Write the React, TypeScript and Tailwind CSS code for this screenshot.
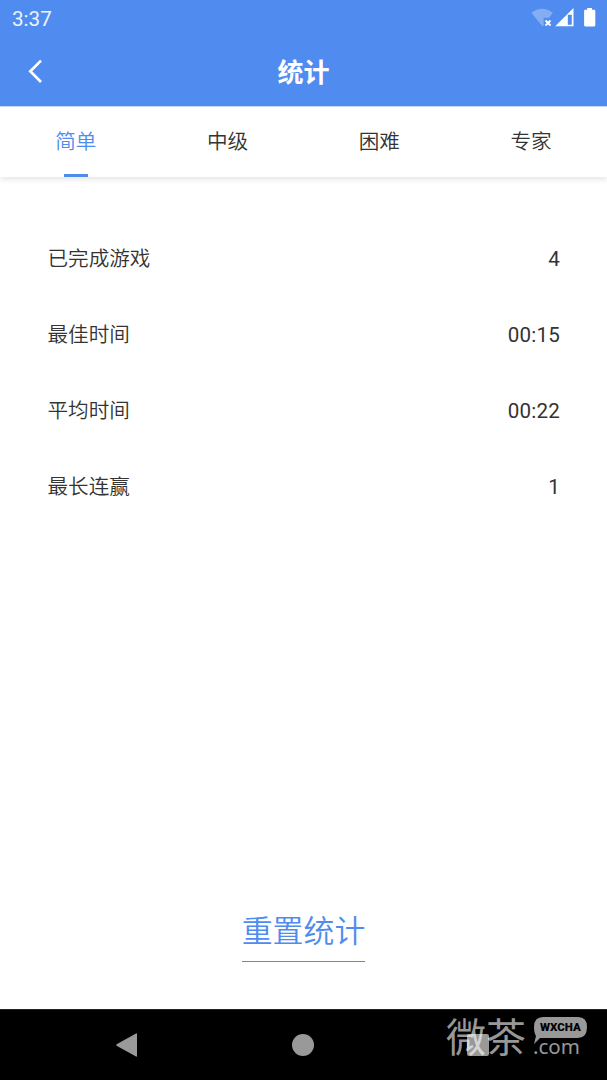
const tabs = ['简单', '中级', '困难', '专家'];

const stats = [
  { label: '已完成游戏', value: '4' },
  { label: '最佳时间', value: '00:15' },
  { label: '平均时间', value: '00:22' },
  { label: '最长连赢', value: '1' },
];

function StatusBar() {
  return (
    <div className="flex h-9 items-center justify-between pl-3 pr-[11px]">
      <span className="pt-[2px] text-[20.6px] leading-6 text-white/90">3:37</span>
      <svg width="66" height="24" viewBox="530 6 66 24" fill="#fff" aria-hidden="true">
        <path d="M531.4 12.8Q542 4.6 552.8 12.8L549 17.8H543.6V26.2L542 25.8Z" opacity=".3" />
        <path d="M545.5 20.5L550.5 25.5M550.5 20.5L545.5 25.5" stroke="#fff" strokeWidth="1.9" />
        <path d="M573.5 8V26.3H555.2ZM571.8 14.8H567.8V24.7H571.8Z" fillRule="evenodd" />
        <path d="M587.2 8H592V9.8H594.2Q595.3 9.8 595.3 10.9V25.3Q595.3 26.4 594.2 26.4H585.2Q584.1 26.4 584.1 25.3V10.9Q584.1 9.8 585.2 9.8H587.2Z" />
      </svg>
    </div>
  );
}

function TitleBar() {
  return (
    <div className="grid h-[70px] grid-cols-3 items-center">
      <button className="pl-[27px]" aria-label="返回">
        <svg width="16" height="26" viewBox="0 0 16 26" fill="none" stroke="#fff" strokeWidth="2.7">
          <path d="M14 2.6L3.3 13.3L14 24" />
        </svg>
      </button>
      <h1 className="pt-[3px] text-center text-[26px] font-bold leading-9 text-white">统计</h1>
    </div>
  );
}

function Watermark() {
  return (
    <div className="absolute left-[446px] top-[8px] flex text-white/60">
      <span className="text-[40px] font-normal leading-[42px]">微茶</span>
      <div className="relative ml-[8px] w-[56px]">
        <svg className="absolute left-0 top-[-2px]" width="54" height="30" viewBox="0 0 54 30" fill="#999" aria-hidden="true">
          <path d="M9 1H44Q53 1 53 11Q53 22 44 22H6L0 28L2 20Q0 17 0 11Q0 1 9 1Z" />
        </svg>
        <span className="absolute left-[6px] top-[2px] font-['Roboto'] text-[11.5px] font-black leading-[14px] text-black">WXCHA</span>
        <span className="absolute left-[-1px] top-[15px] font-['Noto_Sans'] text-[20.5px] leading-[26px]">.com</span>
      </div>
    </div>
  );
}

export default function App() {
  return (
    <main className="flex h-[1080px] w-[607px] flex-col overflow-hidden bg-white font-['Roboto','Noto_Sans_CJK_SC',sans-serif] text-[#333]" lang="zh-CN">
      <header className="shrink-0 border-b border-[#c5d9fb] bg-[#508bef]">
        <StatusBar />
        <TitleBar />
      </header>
      <nav className="grid h-[70px] shrink-0 grid-cols-4 shadow-[0_3px_5px_rgba(0,0,0,0.09)]">
        {tabs.map((tab, index) => (
          <button key={tab} className={`flex flex-col items-center justify-between pt-[20px] text-[20.6px] font-[350] leading-[30px] ${index === 0 ? 'text-[#508bef]' : ''}`}>
            <span>{tab}</span>
            {index === 0 && <span className="h-[3px] w-6 bg-[#508bef]" />}
          </button>
        ))}
      </nav>
      <section className="flex grow flex-col px-12 pt-[44px]">
        {stats.map((stat) => (
          <div key={stat.label} className="flex h-[76px] items-center justify-between text-[20.6px] leading-[30px]">
            <span className="-ml-[0.5px] font-[350]">{stat.label}</span>
            <span className="-mr-px tracking-[0.2px]">{stat.value}</span>
          </div>
        ))}
        <button className="mb-[47px] mt-auto self-center border-b border-b-[#508bef] pb-[7px] text-[30.9px] font-[350] leading-[44px] text-[#508bef]">重置统计</button>
      </section>
      <footer className="relative h-[71px] shrink-0 border-t border-[#222] bg-black">
        <div className="grid h-full grid-cols-[252px_102px_248px] items-center justify-items-center">
          <svg width="24" height="26" viewBox="0 0 24 26" fill="#999" aria-label="返回">
            <path d="M22 1.5Q23 1 23 2V24Q23 25 22 24.5L2.6 13.7Q1.8 13 2.6 12.3Z" />
          </svg>
          <span className="h-[22px] w-[22px] rounded-full bg-[#999]" />
          <span className="h-[22px] w-[22px] rounded-[2px] bg-[#999]" />
        </div>
        <Watermark />
      </footer>
    </main>
  );
}
